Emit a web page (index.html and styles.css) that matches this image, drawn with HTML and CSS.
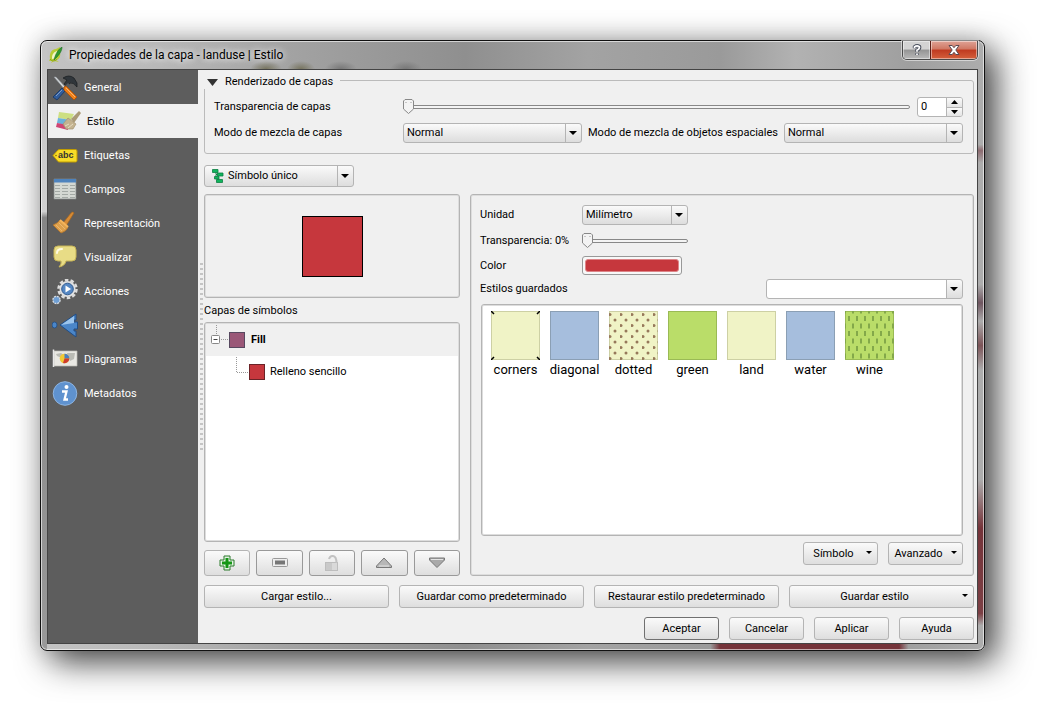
FILE: index.html
```html
<!DOCTYPE html>
<html lang="es">
<head>
<meta charset="utf-8">
<title>Propiedades de la capa - landuse | Estilo</title>
<link rel="stylesheet" href="styles.css">
</head>
<body>
<div class="window">
  <header class="titlebar">
    <svg class="app-icon" viewBox="0 0 14 16" aria-hidden="true"><path d="M1 12C0 6 3 2 7 2L11 0L11 6C12 9 10 13 7 13L10 15L5 14L2 16L3 14L0 14Z" fill="#b9cc35"/><path d="M3 11C3 7 5 5 8 4C9 8 7 12 3 12Z" fill="#f3f6c8"/><path d="M13 0C13 5 9 9 5 13C6 9 8 3 13 0Z" fill="#2f9a2f" stroke="#176b20" stroke-width=".6"/><path d="M1 12C3 15 7 14 8 12" fill="none" stroke="#8da51c"/></svg>
    <h1 class="title">Propiedades de la capa - landuse | Estilo</h1>
    <div class="caption">
      <button class="cap cap-help" type="button" aria-label="Ayuda contextual"><svg viewBox="0 0 12 12"><path d="M3.500 4.200V2.800Q6 .9 8.500 2.500Q9.200 5 6 6.200V7.800M6 9.200V11" fill="none" stroke="#4c5260" stroke-width="3.400"/><path d="M3.500 4V2.900Q6 1 8.300 2.700Q9 5 6 6.200V7.700M6 9.400V10.900" fill="none" stroke="#fff" stroke-width="1.700"/></svg></button>
      <button class="cap cap-close" type="button" aria-label="Cerrar"><svg viewBox="0 0 12 12"><path d="M1 1.500H4.200L6 3.700L7.800 1.500H11L7.800 6L11 10.500H7.800L6 8.300L4.200 10.500H1L4.200 6Z" fill="#fff" stroke="#5b4a52"/></svg></button>
    </div>
  </header>
  <div class="client">
    <nav class="sidebar">
      <a class="nav" href="#general"><svg viewBox="0 0 26 26"><path d="M2 2L4 2L16 15L14 16Z" fill="#d6dadd" stroke="#8a8f94" stroke-width=".6"/><path d="M11 3Q17-1 22 3L25 8L25 12Q21 7 18 8L15 12L12 9L15 5Z" fill="#30363b" stroke="#171b1e" stroke-width=".7"/><path d="M16 8L18 10L13 15L11 13Z" fill="#555b60"/><path d="M10 13L13 16L5 25L1 22Z" fill="#315d9c" stroke="#17335f" stroke-width=".8"/><path d="M12 12L14 11L25 22L22 25L12 15Z" fill="#f08018" stroke="#a84c05" stroke-width=".8"/><path d="M14 13L23 22M10 15L4 21" stroke="#fff" stroke-opacity=".4" fill="none"/></svg><span>General</span></a>
      <a class="nav nav-active" href="#estilo"><svg viewBox="0 0 26 26"><path d="M4 3L19 5L16 11L3 9Z" fill="#cddf82"/><path d="M3 9L16 11L13 17L2 14Z" fill="#6cb2dc"/><path d="M2 14L13 16L13 21L1 18Z" fill="#cf4473"/><path d="M13 9L21 15L18 20L11 20L8 15Z" fill="#c3b28f" stroke="#a59473" stroke-width=".7"/><path d="M16 10L24 2L26 4L19 14Z" fill="#aa9a77"/><path d="M10 17L14 15M13 19L18 15" stroke="#e7dcc3" fill="none"/></svg><span>Estilo</span></a>
      <a class="nav" href="#etiquetas"><svg viewBox="0 0 26 26"><path d="M1 12.500L6 7Q6.500 6.500 8 6.500H23.500Q25 6.500 25 8V17.500Q25 19 23.500 19H8Q6.500 19 6 18.500Z" fill="#f7dc27" stroke="#c19c00"/><circle cx="4" cy="12.500" r=".8" fill="#846c00"/><text class="abc" x="6" y="15">abc</text></svg><span>Etiquetas</span></a>
      <a class="nav" href="#campos"><svg viewBox="0 0 26 26"><path d="M2 2H24V22H2Z" fill="#d4d8d3" stroke="#84898b" stroke-width=".7"/><path d="M2 2H24V5.500H2Z" fill="#4e83bd"/><path d="M3 8.500H8M10 8.500H16M18 8.500H23M3 11.500H8M10 11.500H16M18 11.500H23M3 14.500H8M10 14.500H16M18 14.500H23M3 17.500H8M10 17.500H16M18 17.500H23M3 20.500H8M10 20.500H16M18 20.500H23" stroke="#a3a9a5" fill="none"/></svg><span>Campos</span></a>
      <a class="nav" href="#representacion"><svg viewBox="0 0 26 26"><path d="M11 12L19 2Q21 0 22 2L14 15Z" fill="#d68b36" stroke="#a5641c" stroke-width=".7"/><path d="M8 9L16 16Q15 20 9 22L1 14Q6 12 8 9Z" fill="#dda04b" stroke="#b2722a" stroke-width=".8"/><path d="M4 14L10 20M7 12L13 18" stroke="#ecb670" fill="none"/><path d="M8 9L16 16" stroke="#f5b45b" stroke-width="2"/></svg><span>Representación</span></a>
      <a class="nav" href="#visualizar"><svg viewBox="0 0 26 26"><path d="M6 1H20Q24 1 24 5V12Q24 16 20 16H14Q13 21 7 22Q10 19 9 16H6Q2 16 2 12V5Q2 1 6 1Z" fill="#e8dc86" stroke="#c7b456"/><path d="M5 8Q5 4 10 4" stroke="#fffbe2" stroke-width="2" fill="none" stroke-linecap="round"/></svg><span>Visualizar</span></a>
      <a class="nav" href="#acciones"><svg viewBox="0 0 26 26"><circle cx="15.500" cy="10" r="9" fill="none" stroke="#dcdcdc" stroke-width="2.500" stroke-dasharray="3.500 2.150"/><circle cx="15.500" cy="10" r="8" fill="#e3e3e3"/><circle cx="15.500" cy="10" r="5.800" fill="#5587c3" stroke="#315c92"/><path d="M13.500 6.500L19 10L13.500 13.500Z" fill="#fff"/><circle cx="4.500" cy="21" r="3.600" fill="#6f9fd4" stroke="#d8dde3" stroke-width="1.300" stroke-dasharray="2 .8"/></svg><span>Acciones</span></a>
      <a class="nav" href="#uniones"><svg viewBox="0 0 26 26"><path d="M8 12L24 1V7L22 7L22 9H25.500V16H22V18H24V24Z" fill="#4b86c8" stroke="#204d86"/><path d="M9 12L22 3V10Z" fill="#9cc5ec"/><ellipse cx="2.500" cy="12" rx="2.500" ry="3" fill="#4b86c8" stroke="#204d86" stroke-width=".8"/></svg><span>Uniones</span></a>
      <a class="nav" href="#diagramas"><svg viewBox="0 0 26 26"><path d="M2 4H25V19H2Z" fill="#e9e8e3" stroke="#bdbcb6" stroke-width=".7"/><path d="M4 7L9 6L12 8L10 11L5 9ZM15 6L23 6L22 12L18 14L16 10Z" fill="#babbb4"/><circle cx="12.500" cy="11.500" r="4.800" fill="#f1c935"/><path d="M12.500 11.500V6.700A4.800 4.800 0 0 1 17.300 11.500Z" fill="#4a7fc0"/><path d="M12.500 11.500H17.300A4.800 4.800 0 0 1 11 16Z" fill="#cf3b2d"/><path d="M1.500 2.500V20" stroke="#e7e7e7" stroke-width="1.500"/></svg><span>Diagramas</span></a>
      <a class="nav" href="#metadatos"><svg viewBox="0 0 26 26"><circle cx="13" cy="12.500" r="11.800" fill="#5f92cf" stroke="#8eb5e2"/><circle cx="14.500" cy="6" r="2" fill="#fff"/><path d="M10 10.500H14.500L12.500 18.500H16" stroke="#fff" stroke-width="2.300" fill="none"/></svg><span>Metadatos</span></a>
    </nav>
    <main class="main">
      <fieldset class="group">
        <legend class="legend"><svg class="fold" viewBox="0 0 11 7"><path d="M0 0H11L5.500 7Z" fill="#333"/></svg>Renderizado de capas</legend>
        <div class="render-grid">
          <label for="t1">Transparencia de capas</label>
          <div class="slider-row">
            <input class="range" id="t1" type="range" min="0" max="100" value="0">
            <div class="spin"><input class="spin-text" type="text" value="0" aria-label="Transparencia"><div class="spin-btns"><button type="button" class="spin-btn" aria-label="Más"><svg viewBox="0 0 7 4"><path d="M0 4L3.500 0L7 4Z"/></svg></button><button type="button" class="spin-btn" aria-label="Menos"><svg viewBox="0 0 7 4"><path d="M0 0L3.500 4L7 0Z"/></svg></button></div></div>
          </div>
          <label for="m1">Modo de mezcla de capas</label>
          <div class="combo"><select id="m1"><option>Normal</option></select></div>
          <label for="m2">Modo de mezcla de objetos espaciales</label>
          <div class="combo"><select id="m2"><option>Normal</option></select></div>
        </div>
      </fieldset>
      <div class="combo combo-renderer"><svg class="combo-icon" viewBox="0 0 12 14"><g fill="#10b45c" stroke="#0b7f42" stroke-width=".8"><path d="M.5 .5H6V3.500H.5Z"/><path d="M5.500 4H11V7H5.500Z"/><path d="M2.500 7.500H7V10H2.500Z"/><path d="M4.500 10.500H10.500V13.500H4.500Z"/></g><path d="M4 3.500V5.500H5.500M4 7.500V6M6 10V11" stroke="#0b7f42" fill="none"/></svg><select aria-label="Tipo de símbolo"><option>Símbolo único</option></select></div>
      <div class="columns">
        <section class="left">
          <div class="preview"><div class="preview-fill"></div></div>
          <h2 class="tree-title">Capas de símbolos</h2>
          <div class="tree">
            <div class="tree-row tree-root"><svg class="branch" viewBox="0 0 24 32"><path d="M10.500 1V11M15 15.500H22" stroke="#999" stroke-dasharray="1 1" fill="none"/><rect x="5.500" y="11.500" width="8" height="8" rx="1" fill="#fff" stroke="#888"/><path d="M7.500 15.500H11.500" stroke="#444"/></svg><i class="chip chip-fill"></i><b>Fill</b></div>
            <div class="tree-row"><svg class="branch branch-child" viewBox="0 0 44 32"><path d="M30.500 1V16.500H42" stroke="#999" stroke-dasharray="1 1" fill="none"/></svg><i class="chip chip-red"></i><span>Relleno sencillo</span></div>
          </div>
          <div class="tools">
            <button type="button" class="btn tool" aria-label="Añadir"><svg viewBox="0 0 16 16"><path d="M5 1H11V5H15V11H11V15H5V11H1V5H5Z" fill="#e4f3e4" stroke="#2c7a2c"/><path d="M6.500 3H9.500V6.500H13V9.500H9.500V13H6.500V9.500H3V6.500H6.500Z" fill="#149614"/></svg></button>
            <button type="button" class="btn tool tool-dark" aria-label="Quitar"><svg viewBox="0 0 16 16"><rect x=".5" y="3.500" width="15" height="8" rx="1" fill="#eee" stroke="#999"/><rect x="3" y="5.500" width="10" height="4" fill="#777"/></svg></button>
            <button type="button" class="btn tool tool-dark" aria-label="Bloquear"><svg viewBox="0 0 16 16"><rect x="1.500" y="7.500" width="12" height="8" fill="#c9c9c9" stroke="#bdbdbd"/><path d="M5 4Q6 .8 9 1Q12.500 1.500 12.500 8" fill="none" stroke="#c2c2c2" stroke-width="2"/><path d="M8 8H13V15H8Z" fill="#d9d9d9"/></svg></button>
            <button type="button" class="btn tool tool-dark" aria-label="Subir"><svg viewBox="0 0 16 16"><path d="M8 3L15.500 11V12.500H.5V11Z" fill="#b7b7b7" stroke="#777"/><path d="M3 11H13" stroke="#e3e3e3"/></svg></button>
            <button type="button" class="btn tool tool-dark" aria-label="Bajar"><svg viewBox="0 0 16 16"><path d="M.5 3H15.500V5L8 12.500L.5 5Z" fill="#a9a9a9" stroke="#777"/><path d="M2 4.500H14" stroke="#e3e3e3"/></svg></button>
          </div>
        </section>
        <section class="panel">
          <div class="props">
            <label for="u">Unidad</label><div class="combo combo-unit"><select id="u"><option>Milímetro</option></select></div>
            <label for="t2">Transparencia: 0%</label><input class="range range-short" id="t2" type="range" min="0" max="100" value="0">
            <label for="c">Color</label><button class="color" id="c" type="button" aria-label="Color"><span class="color-fill"></span></button>
          </div>
          <div class="saved"><label for="s">Estilos guardados</label><div class="combo combo-edit"><select id="s"><option></option></select></div></div>
          <ul class="styles">
            <li><svg class="sw" viewBox="0 0 49 49"><rect x=".5" y=".5" width="48" height="48" fill="#f0f3c6" stroke="#cdd0a4"/><path d="M0 0L3 3M46 3L49 0M0 49L3 46M46 46L49 49" stroke="#000" stroke-width="1.500"/></svg>corners</li>
            <li><svg class="sw" viewBox="0 0 49 49"><rect x=".5" y=".5" width="48" height="48" fill="#a6bedd" stroke="#8b9fb4"/></svg>diagonal</li>
            <li><svg class="sw" viewBox="0 0 49 49"><defs><pattern id="dots" width="11" height="11" patternUnits="userSpaceOnUse" y="-2"><circle cx="1" cy="5.500" r="1.500" fill="#96785a"/><circle cx="6" cy="11" r="1.500" fill="#96785a"/><circle cx="6" cy="0" r="1.500" fill="#96785a"/></pattern></defs><rect x=".5" y=".5" width="48" height="48" fill="#f0f3c6" stroke="#cdd0a4"/><rect width="49" height="49" fill="url(#dots)"/></svg>dotted</li>
            <li><svg class="sw" viewBox="0 0 49 49"><rect x=".5" y=".5" width="48" height="48" fill="#badd69" stroke="#9aba55"/></svg>green</li>
            <li><svg class="sw" viewBox="0 0 49 49"><rect x=".5" y=".5" width="48" height="48" fill="#f0f3c6" stroke="#cdd0a4"/></svg>land</li>
            <li><svg class="sw" viewBox="0 0 49 49"><rect x=".5" y=".5" width="48" height="48" fill="#a6bedd" stroke="#8b9fb4"/></svg>water</li>
            <li><svg class="sw" viewBox="0 0 49 49"><defs><pattern id="vines" width="8" height="15" patternUnits="userSpaceOnUse"><path d="M4 5V10" stroke="#83a84a" stroke-width="2"/><path d="M0 0V2.500M0 12.500V15M8 0V2.500M8 12.500V15" stroke="#83a84a" stroke-width="2"/></pattern></defs><rect x=".5" y=".5" width="48" height="48" fill="#badd69" stroke="#9aba55"/><rect width="49" height="49" fill="url(#vines)"/></svg>wine</li>
          </ul>
          <div class="panel-actions">
            <button type="button" class="btn btn-menu">Símbolo</button>
            <button type="button" class="btn btn-menu">Avanzado</button>
          </div>
        </section>
      </div>
      <div class="style-actions">
        <button type="button" class="btn">Cargar estilo...</button>
        <button type="button" class="btn">Guardar como predeterminado</button>
        <button type="button" class="btn">Restaurar estilo predeterminado</button>
        <button type="button" class="btn btn-menu">Guardar estilo</button>
      </div>
      <footer class="dialog-actions">
        <button type="button" class="btn btn-default">Aceptar</button>
        <button type="button" class="btn">Cancelar</button>
        <button type="button" class="btn">Aplicar</button>
        <button type="button" class="btn">Ayuda</button>
      </footer>
      <div class="grip"></div>
    </main>
  </div>
</div>
</body>
</html>
```
FILE: styles.css
```css
* { box-sizing: border-box; }
body {
  margin: 0;
  min-height: 100vh;
  padding: 40px 60px 60px 40px;
  display: flex;
  background: #fff;
  color: #000;
  font: 11px/14px Roboto, "DejaVu Sans Condensed", sans-serif;
}
button, input, select { font: inherit; color: inherit; margin: 0; }
svg { display: block; }
label { white-space: nowrap; }

.window {
  flex: 1;
  display: flex;
  flex-direction: column;
  min-width: 0;
  padding: 0 6px 6px;
  border: 1px solid #111;
  border-radius: 7px;
  background:
    linear-gradient(90deg, transparent 71%, #75343a 72%, #75343a 91%, transparent 92%) bottom / 100% 6px no-repeat,
    linear-gradient(transparent 17%, #8d6b70 18%, transparent 20%, transparent 40%, #6f5660 43%, transparent 46%, #7c5458 50%, transparent 54%, transparent 72%, #75343a 80%, #7c4045 94%, transparent 96%) right / 6px 100% no-repeat,
    linear-gradient(#c4c4c4 0, #d0d0d0 28%, #858585 29%, #999 100%) left / 6px 100% no-repeat,
    radial-gradient(ellipse 16px 8px at 225px 28px, #77745f, transparent),
    radial-gradient(ellipse 14px 8px at 260px 28px, #77745f, transparent),
    radial-gradient(ellipse 16px 8px at 300px 28px, #777, transparent),
    radial-gradient(ellipse 16px 8px at 365px 28px, #777, transparent),
    linear-gradient(90deg, #c4c4c4, #b9b9b9 12%, #a3a3a3 26%, #8f8f8f 45%, #a3a3a3 58%, #9a9a9a 72%, #b2b2b2 80%, #9f9f9f 92%, #adadad);
  box-shadow: inset 0 0 0 1px rgba(255, 255, 255, .6), 0 0 26px rgba(0, 0, 0, .15), 11px 11px 34px rgba(0, 0, 0, .72);
}

.titlebar { display: flex; align-items: flex-start; height: 28px; padding-left: 2px; }
.app-icon { width: 14px; height: 16px; margin-top: 6px; }
.title {
  flex: 1;
  margin: 0 0 0 6px;
  padding-top: 5px;
  font-size: 12px;
  font-weight: normal;
  line-height: 18px;
  text-shadow: 0 0 6px #fff, 0 0 10px rgba(255, 255, 255, .7);
}
.caption { display: flex; border: 1px solid #4a4a4a; border-top: 0; border-radius: 0 0 5px 5px; overflow: hidden; box-shadow: 0 0 0 1px rgba(255, 255, 255, .5); }
.cap { display: grid; place-items: center; height: 18px; padding: 0; border: 0; box-shadow: inset 0 0 0 1px rgba(255, 255, 255, .45); }
.cap svg { width: 12px; height: 12px; }
.cap-help { width: 27px; background: linear-gradient(#d3d3d3 45%, #949494 50%, #b9b9b9); }
.cap-close { width: 47px; border-left: 1px solid #5c2018; background: linear-gradient(#dfa396 0, #cf7763 45%, #bf3a20 50%, #d4603c); }

.client { flex: 1; display: flex; border: 1px solid #444; background: #f0f0f0; }
.sidebar { width: 150px; background: #5d5d5d; }
.nav { display: flex; align-items: center; gap: 6px; height: 34px; padding: 2px 4px 0; color: #fff; text-decoration: none; }
.nav svg { width: 26px; height: 26px; }
.nav-active { padding-left: 7px; background: #f0f0f0; color: #000; }
.abc { font: bold 9px "Liberation Sans", sans-serif; fill: #333; }

.main { position: relative; flex: 1; display: flex; flex-direction: column; min-width: 0; padding: 1px 3px 3px 6px; }
.grip {
  position: absolute;
  left: 2px; top: 190px;
  width: 3px; height: 190px;
  background: linear-gradient(#f0f0f0 60%, transparent 60%) 0 0 / 3px 5px, #c4c4c4;
}

.group { margin: 0; padding: 0 10px 10px 9px; border: 1px solid #bbb; border-radius: 3px; min-width: 0; }
.legend { display: flex; align-items: center; gap: 7px; margin-left: -10px; padding: 4px 7px 0 3px; background: #f0f0f0; }
.fold { width: 11px; height: 7px; }
.render-grid { display: grid; grid-template-columns: 183px 1fr auto 1fr; gap: 6px; align-items: center; padding-top: 8px; }
.slider-row { grid-column: 2 / -1; display: flex; align-items: center; gap: 7px; }

.combo { position: relative; display: flex; height: 20px; }
.combo select {
  appearance: none;
  flex: 1;
  min-width: 0;
  height: 100%;
  padding: 0 20px 0 3px;
  border: 1px solid #b4b4b4;
  border-radius: 3px;
  background: linear-gradient(90deg, #b4b4b4, #b4b4b4) right 15px top / 1px 100% no-repeat, linear-gradient(#fafafa, #ddd);
}
.combo::after { content: ""; position: absolute; right: 5px; top: 50%; margin-top: -2px; border: 4px solid transparent; border-top-color: #000; border-bottom: 0; pointer-events: none; }
.combo-renderer { width: 150px; height: 22px; margin-top: 11px; }
.combo-renderer select { padding-left: 23px; }
.combo-icon { position: absolute; left: 8px; top: 4px; width: 12px; height: 14px; pointer-events: none; }
.combo-unit { width: 106px; }
.combo-edit { width: 197px; }
.combo-edit select { background: linear-gradient(90deg, #b4b4b4, #b4b4b4) right 15px top / 1px 100% no-repeat, linear-gradient(#fafafa, #ddd) right / 15px 100% no-repeat, #fff; }

.range { appearance: none; flex: 1; min-width: 0; height: 17px; background: none; }
.range::-webkit-slider-runnable-track { height: 4px; border: 1px solid #888; border-radius: 2px; background: #f4f4f4; }
.range::-webkit-slider-thumb {
  appearance: none;
  width: 11px;
  height: 15px;
  margin: -7px 0 0 -1px;
  background: url("data:image/svg+xml,%3Csvg xmlns='http://www.w3.org/2000/svg' viewBox='0 0 11 15'%3E%3Cpath d='M2 .5H9L10.500 2V10L5.500 14.500L.5 10V2Z' fill='%23f3f3f3' stroke='%23888'/%3E%3Cpath d='M3 4V3M8 4V3' stroke='%23999'/%3E%3C/svg%3E");
}
.range-short { width: 106px; }

.spin { display: flex; width: 46px; height: 20px; border: 1px solid #b4b4b4; border-radius: 3px; overflow: hidden; background: #fff; }
.spin-text { flex: 1; min-width: 0; padding: 0 3px; border: 0; background: none; }
.spin-btns { display: flex; flex-direction: column; width: 16px; border-left: 1px solid #b4b4b4; }
.spin-btn { flex: 1; display: grid; place-items: center; padding: 0; border: 0; background: linear-gradient(#fafafa, #e4e4e4); }
.spin-btn + .spin-btn { border-top: 1px solid #b4b4b4; }
.spin-btn svg { width: 7px; height: 4px; }

.columns { flex: 1; display: grid; grid-template-columns: 256px 1fr; gap: 10px; margin-top: 7px; }
.left { display: flex; flex-direction: column; }
.preview, .tree, .styles, .panel { border: 1px solid #b4b4b4; border-radius: 3px; box-shadow: inset 0 0 0 1px #ddd; }
.preview { display: grid; place-items: center; height: 104px; }
.preview-fill { width: 61px; height: 61px; border: 1px solid #000; background: #c6373d; }
.tree-title { margin: 6px 0 4px; font: inherit; }
.tree { flex: 1; padding: 1px; background: #fff; }
.tree-row { display: flex; align-items: center; height: 32px; }
.tree-root { background: #f0f0f0; }
.branch { width: 24px; height: 32px; margin-right: -1px; }
.branch-child { width: 44px; }
.chip { width: 16px; height: 16px; margin-right: 6px; border: 1px solid #57485f; background: #9a5777; }
.chip-red { margin-right: 5px; border-color: #6b2327; background: #c6373d; }
.tools { display: flex; gap: 6px; margin-top: 8px; }

.btn {
  position: relative;
  height: 23px;
  padding: 0 4px;
  border: 1px solid #b4b4b4;
  border-radius: 3px;
  background: linear-gradient(#fafafa, #dedede);
  white-space: nowrap;
}
.tool { flex: 1; display: grid; place-items: center; height: 26px; }
.tool svg { width: 16px; height: 16px; }
.tool-dark { border-color: #999; }
.btn-default { border-color: #707070; }
.btn-menu { padding-right: 18px; }
.btn-menu::after { content: ""; position: absolute; right: 5px; top: 8px; border: 3px solid transparent; border-top-color: #000; border-bottom: 0; }

.panel { display: flex; flex-direction: column; min-width: 0; padding: 10px 10px 10px 9px; }
.props { display: grid; grid-template-columns: 92px 1fr; gap: 7px 10px; align-items: center; }
.color { width: 100px; height: 19px; padding: 2px; border: 1px solid #999; border-radius: 3px; background: #f8f8f8; }
.color-fill { display: block; height: 13px; border: 1px solid #dd8588; border-radius: 3px; background: #c6373d; }
.saved { display: flex; align-items: center; justify-content: space-between; margin-top: 4px; }
.styles { flex: 1; display: flex; align-items: flex-start; margin: 5px 0 6px 1px; padding: 6px 4px; background: #fff; list-style: none; font-size: 13px; line-height: 18px; }
.styles li { width: 59px; text-align: center; }
.sw { width: 49px; height: 49px; margin: 0 auto 1px; }
.panel-actions { display: flex; justify-content: flex-end; gap: 10px; }
.panel-actions .btn { width: 75px; }

.style-actions { display: grid; grid-template-columns: repeat(4, 1fr); gap: 10px; margin-top: 9px; }
.dialog-actions { display: flex; justify-content: flex-end; gap: 10px; margin-top: 9px; }
.dialog-actions .btn { width: 75px; }
```
